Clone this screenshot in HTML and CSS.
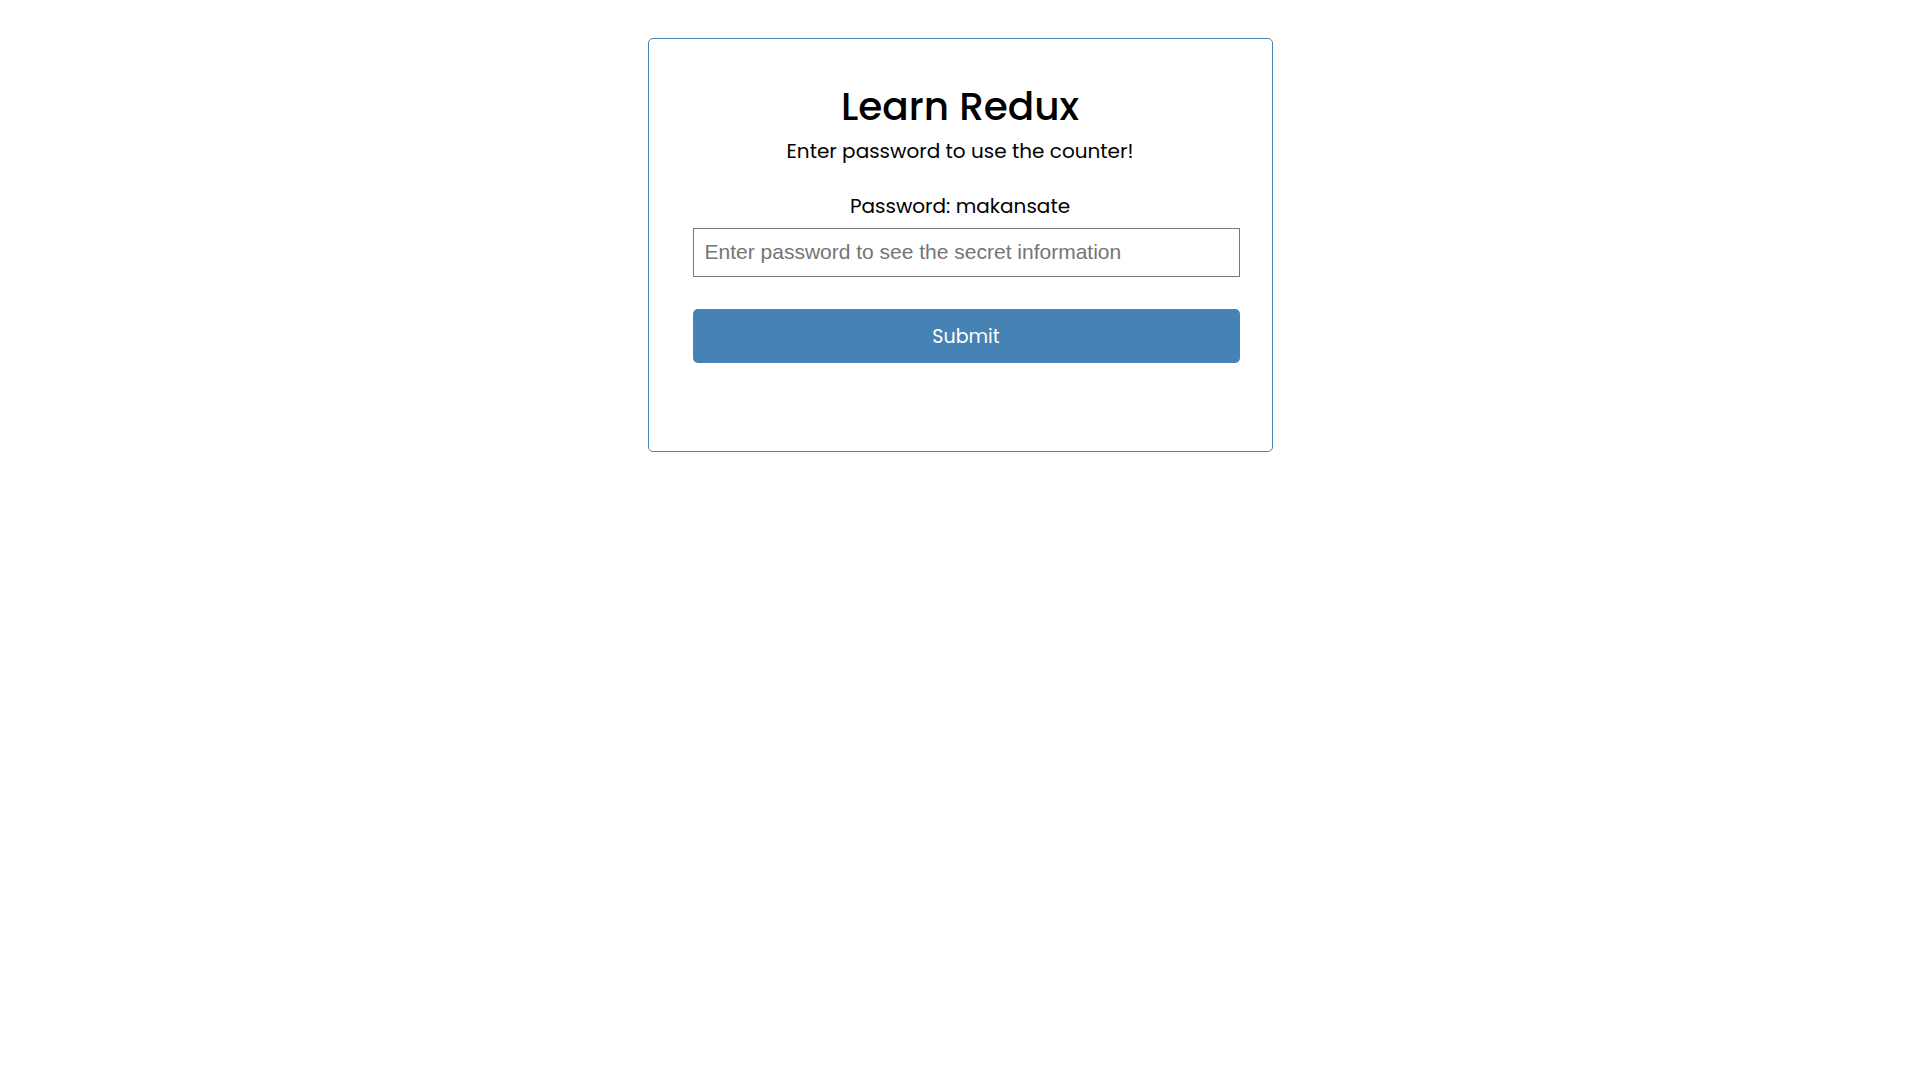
FILE: index.html
```html
<!DOCTYPE html>
<html lang="en">
<head>
    <meta charset="UTF-8">
    <meta name="viewport" content="width=device-width, initial-scale=1.0">
    <title>Learn Redux</title>
    <link rel="stylesheet" href="styles.css">
</head>
<body>

    <div class="card">
        <h1 class="title">Learn Redux</h1>
        <p class="subtitle">Enter password to use the counter!</p>

        <form class="login-form" onsubmit="return false;">
            <label class="hint" for="password">Password: makansate</label>
            <input class="password-input" id="password" type="password" placeholder="Enter password to see the secret information">
            <button class="submit-btn" type="submit">Submit</button>
        </form>
    </div>

</body>
</html>
```

FILE: styles.css
```css
body {
    margin: 0;
    background-color: #fff;
    color: #000;
    font-family: "Poppins", "Inter", sans-serif;
}
.card {
    box-sizing: border-box;
    width: 625px;
    margin: 38px auto 0;
    padding: 46px 44px 88px;
    border: 1px solid steelblue;
    border-radius: 5px;
    text-align: center;
}
.title {
    margin: 0;
    font-size: 39px;
    font-weight: 500;
    line-height: 44px;
}
.subtitle {
    margin: 8px 0 0;
    font-size: 20px;
    line-height: 28px;
}
.login-form {
    display: flex;
    flex-direction: column;
    margin-top: 27px;
}
.hint {
    font-size: 20px;
    line-height: 28px;
}
.password-input,
.submit-btn {
    box-sizing: border-box;
    width: calc(100% + 12px);
}
.password-input {
    height: 49px;
    margin-top: 8px;
    padding: 0 11px 2px;
    border: 1px solid #767676;
    border-radius: 0;
    font-family: "Liberation Sans", Arial, sans-serif;
    font-size: 21px;
}
.password-input::placeholder {
    color: #757575;
}
.submit-btn {
    height: 54px;
    margin-top: 32px;
    border: none;
    border-radius: 5px;
    background-color: steelblue;
    color: #fff;
    font-family: inherit;
    font-size: 19px;
    cursor: pointer;
}
```
